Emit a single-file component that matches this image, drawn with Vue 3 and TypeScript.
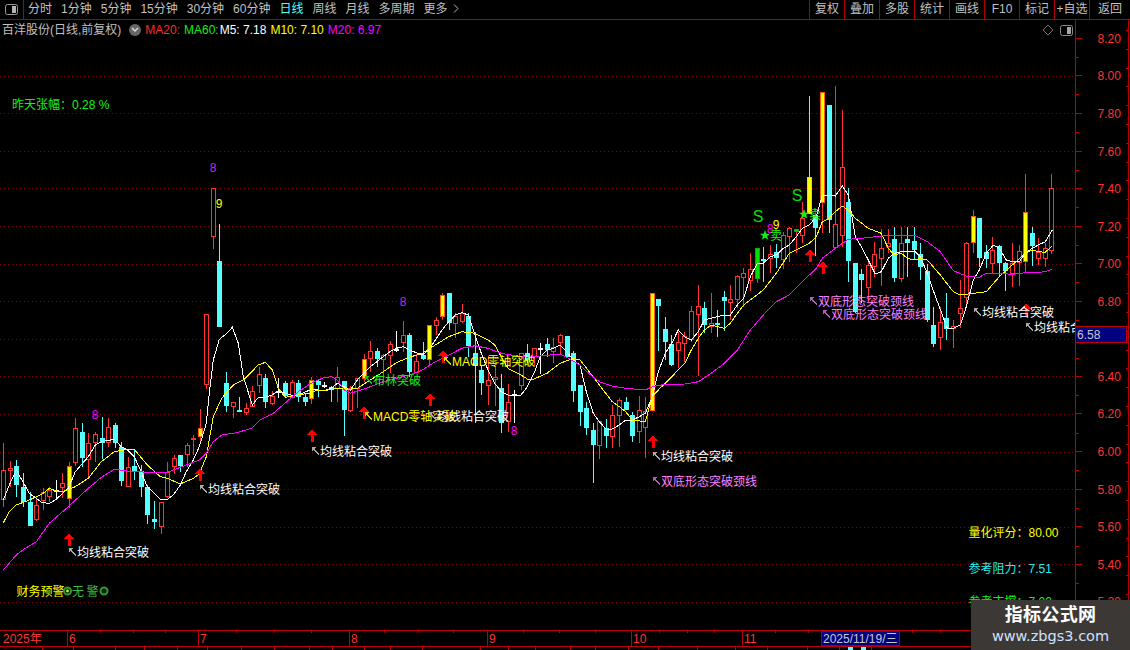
<script setup lang="ts">
type Kind = 'r' | 'c' | 'y' | 'g' | 'w' | 'q';
// top, bottom, high, low, kind (all in screen pixels)
type Bar = [number, number, number, number, Kind];
type Seg = [number, number, number[]];

const STEP = 6.55;

const raw: Bar[] = [
  [470, 500, 443, 507, 'r'], [468, 471, 461, 487, 'r'], [466, 485, 460, 497, 'c'], [487, 502, 473, 507, 'c'],
  [502, 526, 492, 526, 'c'], [505, 520, 497, 521, 'r'], [492, 501, 488, 510, 'r'], [490, 497, 487, 502, 'r'],
  [490, 491, 480, 498, 'w'], [483, 488, 473, 498, 'r'], [466, 499, 462, 508, 'y'], [428, 463, 418, 466, 'r'],
  [432, 458, 423, 467, 'c'], [443, 460, 433, 477, 'r'], [434, 443, 432, 462, 'r'], [438, 443, 417, 459, 'c'],
  [427, 443, 418, 447, 'r'], [425, 443, 423, 448, 'c'], [447, 481, 442, 486, 'c'], [467, 487, 457, 487, 'r'],
  [466, 471, 450, 480, 'c'], [471, 487, 465, 497, 'c'], [487, 515, 485, 524, 'c'], [519, 522, 501, 529, 'c'],
  [502, 527, 502, 534, 'r'], [472, 497, 462, 498, 'r'], [458, 467, 455, 474, 'r'], [455, 466, 455, 472, 'c'],
  [445, 455, 443, 467, 'r'], [438, 440, 435, 455, 'r'], [428, 437, 409, 443, 'y'], [314, 385, 314, 389, 'r'],
  [188, 237, 188, 249, 'r'], [261, 327, 224, 327, 'c'], [383, 406, 372, 412, 'c'], [402, 407, 402, 418, 'r'],
  [410, 412, 397, 412, 'c'], [408, 413, 403, 415, 'r'], [391, 407, 386, 407, 'r'], [374, 386, 367, 393, 'r'],
  [378, 402, 374, 408, 'c'], [396, 404, 391, 405, 'r'], [391, 392, 378, 398, 'w'], [383, 396, 381, 398, 'c'],
  [382, 398, 380, 398, 'r'], [383, 397, 380, 402, 'c'], [397, 402, 393, 406, 'c'], [380, 399, 377, 404, 'y'],
  [381, 385, 380, 397, 'c'], [385, 386, 382, 388, 'w'], [387, 390, 386, 402, 'c'], [377, 389, 367, 402, 'r'],
  [381, 410, 381, 436, 'c'], [388, 411, 386, 412, 'r'], [378, 389, 378, 408, 'r'], [359, 379, 354, 382, 'y'],
  [351, 359, 341, 372, 'r'], [351, 359, 348, 367, 'c'], [355, 360, 354, 380, 'r'], [344, 356, 341, 373, 'r'],
  [349, 350, 331, 352, 'w'], [335, 343, 321, 352, 'r'], [335, 372, 333, 377, 'c'], [361, 373, 354, 373, 'r'],
  [355, 359, 342, 360, 'c'], [325, 360, 325, 366, 'y'], [320, 326, 317, 335, 'r'], [295, 317, 293, 320, 'y'],
  [293, 323, 293, 330, 'c'], [316, 324, 313, 338, 'r'], [313, 322, 304, 323, 'r'], [316, 346, 313, 357, 'c'],
  [353, 366, 332, 423, 'c'], [370, 383, 366, 395, 'c'], [380, 386, 356, 405, 'r'], [377, 380, 366, 406, 'r'],
  [388, 423, 374, 433, 'c'], [402, 422, 384, 432, 'r'], [394, 395, 390, 423, 'w'], [353, 386, 353, 390, 'r'],
  [353, 360, 344, 363, 'c'], [348, 357, 348, 365, 'r'], [348, 349, 343, 374, 'w'], [344, 350, 338, 357, 'c'],
  [347, 352, 338, 363, 'r'], [335, 343, 334, 355, 'r'], [336, 357, 336, 358, 'c'], [353, 391, 351, 402, 'c'],
  [385, 412, 385, 426, 'c'], [408, 428, 402, 435, 'c'], [430, 445, 423, 483, 'c'], [421, 446, 421, 459, 'r'],
  [428, 436, 419, 448, 'c'], [415, 437, 405, 448, 'r'], [400, 416, 398, 447, 'r'], [402, 410, 397, 410, 'c'],
  [415, 436, 412, 442, 'c'], [410, 432, 396, 443, 'r'], [411, 428, 397, 458, 'r'], [293, 411, 293, 411, 'y'],
  [299, 306, 299, 351, 'c'], [329, 342, 317, 360, 'c'], [344, 365, 335, 366, 'c'], [342, 351, 332, 368, 'r'],
  [336, 344, 332, 362, 'r'], [311, 340, 306, 342, 'r'], [306, 315, 285, 376, 'r'], [308, 325, 302, 333, 'c'],
  [323, 327, 293, 333, 'r'], [323, 325, 310, 337, 'c'], [297, 301, 291, 331, 'c'], [299, 303, 285, 320, 'r'],
  [276, 300, 275, 308, 'r'], [273, 278, 268, 307, 'r'], [269, 281, 253, 291, 'r'], [248, 279, 248, 283, 'g'],
  [259, 261, 247, 282, 'c'], [254, 259, 245, 273, 'r'], [252, 258, 244, 268, 'c'], [235, 260, 232, 269, 'r'],
  [228, 237, 227, 262, 'r'], [229, 232, 229, 253, 'g'], [218, 236, 202, 243, 'r'], [177, 214, 96, 214, 'q'],
  [215, 228, 215, 256, 'c'], [92, 203, 92, 233, 'y'], [105, 220, 105, 233, 'c'], [224, 248, 86, 248, 'r'],
  [167, 236, 110, 247, 'r'], [202, 261, 188, 282, 'c'], [263, 312, 263, 313, 'c'], [274, 280, 269, 303, 'c'],
  [265, 288, 260, 302, 'r'], [254, 267, 242, 277, 'r'], [248, 259, 229, 286, 'r'], [243, 247, 229, 253, 'r'],
  [239, 278, 227, 282, 'c'], [243, 279, 227, 282, 'r'], [239, 243, 227, 277, 'c'], [241, 250, 227, 260, 'c'],
  [254, 267, 243, 280, 'c'], [271, 320, 264, 322, 'c'], [325, 344, 307, 347, 'c'], [322, 338, 307, 350, 'r'],
  [318, 329, 293, 340, 'c'], [326, 329, 320, 348, 'r'], [308, 314, 280, 328, 'r'], [243, 298, 242, 307, 'r'],
  [216, 243, 210, 253, 'y'], [218, 258, 218, 267, 'c'], [252, 259, 245, 268, 'c'], [250, 264, 237, 273, 'r'],
  [246, 263, 245, 277, 'c'], [263, 271, 262, 291, 'c'], [263, 274, 243, 287, 'r'], [251, 263, 245, 286, 'r'],
  [212, 262, 174, 273, 'y'], [233, 246, 227, 266, 'c'], [252, 259, 238, 265, 'r'], [248, 259, 243, 267, 'r'],
  [188, 251, 174, 254, 'r'],
];

const bars = raw.map(([top, bottom, high, low, kind], i) => ({
  x: Math.round(3.3 + STEP * i),
  top,
  bottom,
  high,
  low,
  kind,
}));

// line points were read off crops, each segment has its own origin at 3x scale
const toPoints = (segs: Seg[]) =>
  segs
    .map(([ox, oy, p]) => {
      const out: string[] = [];
      for (let i = 0; i < p.length; i += 2) {
        out.push(`${(ox + p[i] / 3).toFixed(1)},${(oy + p[i + 1] / 3).toFixed(1)}`);
      }
      return out.join(' ');
    })
    .join(' ');

const m5 = toPoints([
  [0, 400, [10, 300, 28, 255, 49, 210, 88, 280, 127, 308, 148, 310, 166, 300, 205, 265, 226, 215, 265, 170, 286, 135, 304, 125, 343, 118, 364, 140, 382, 150, 403, 170, 421, 210, 442, 260, 481, 298, 502, 298, 520, 285, 541, 255, 559, 215, 580, 180, 598, 140, 619, 70]],
  [180, 150, [88, 730, 100, 630, 118, 568, 139, 552, 157, 532, 175, 580, 190, 680, 217, 765, 235, 742, 256, 742, 277, 735, 295, 722, 316, 730, 334, 735, 355, 735, 394, 718, 433, 722, 454, 715, 472, 700, 511, 720]],
  [340, 280, [52, 300, 91, 260, 130, 230, 150, 215, 169, 205, 190, 200, 208, 210, 247, 225, 267, 210, 286, 180, 306, 150, 326, 125, 346, 105, 366, 98, 385, 105, 405, 165, 424, 220, 444, 270, 464, 310, 484, 335, 504, 345, 523, 345, 543, 345, 562, 320, 582, 280, 601, 230, 621, 210, 640, 205, 660, 195, 680, 215, 700, 240]],
  [560, 280, [60, 255, 80, 340, 100, 400, 118, 425, 138, 447, 157, 447, 178, 435, 197, 420, 217, 420, 238, 410, 256, 400, 277, 350, 295, 275, 316, 220, 335, 190, 355, 150, 374, 170, 394, 180, 415, 155, 433, 120, 454, 115, 472, 110, 493, 105, 511, 105, 532, 75, 551, 55]],
  [720, 80, [91, 590, 112, 550, 130, 550, 151, 530, 169, 525, 190, 505, 208, 495, 229, 470, 247, 445, 268, 435, 289, 410, 307, 345, 328, 345, 346, 348, 367, 318, 385, 345, 406, 470, 424, 500, 445, 540, 466, 582, 484, 575, 505, 535, 523, 520, 544, 515, 562, 515, 583, 513, 601, 530, 622, 580, 643, 640, 682, 745, 700, 745, 721, 735, 739, 680, 760, 600, 778, 570, 799, 520, 820, 495, 838, 505, 859, 540, 877, 545, 898, 545, 916, 520, 937, 505, 955, 495, 976, 485, 997, 450]],
]);

const m10 = toPoints([
  [0, 400, [10, 368, 28, 335, 49, 315, 88, 300, 127, 282, 148, 265, 166, 272, 187, 275, 226, 260, 265, 235, 304, 185, 343, 155, 382, 148, 403, 148, 442, 195, 481, 230, 502, 235, 541, 252, 580, 235, 598, 222, 619, 170]],
  [180, 150, [100, 800, 125, 745, 160, 705, 190, 690, 235, 645, 256, 637, 277, 660, 295, 715, 316, 742, 355, 735, 394, 728, 412, 720, 433, 722, 472, 715, 511, 718, 532, 715]],
  [340, 280, [91, 300, 130, 275, 169, 248, 208, 232, 247, 220, 286, 195, 326, 170, 366, 155, 405, 160, 444, 180, 464, 195, 484, 230, 504, 265, 543, 285, 562, 297, 582, 297, 621, 280, 660, 250, 700, 235]],
  [560, 280, [60, 240, 80, 265, 118, 315, 157, 365, 178, 380, 197, 395, 217, 420, 256, 425, 277, 350, 295, 330, 335, 290, 374, 250, 394, 210, 415, 175, 433, 150, 454, 135, 493, 145, 511, 130, 532, 100, 551, 75]],
  [720, 80, [91, 660, 130, 630, 169, 580, 208, 520, 247, 500, 268, 490, 289, 470, 307, 425, 328, 415, 346, 395, 367, 378, 385, 390, 406, 415, 445, 445, 484, 460, 505, 505, 523, 525, 544, 520, 562, 535, 583, 540, 601, 535, 622, 540, 661, 585, 700, 635, 721, 645, 760, 640, 799, 635, 838, 590, 877, 555, 916, 520, 937, 510, 955, 515, 976, 517, 997, 497]],
]);

const m20 = toPoints([
  [0, 400, [10, 510, 49, 465, 68, 450, 109, 425, 148, 370, 205, 320, 265, 265, 304, 232, 343, 208, 382, 213, 442, 217, 502, 217, 559, 195, 598, 180, 619, 160, 640, 125]],
  [180, 150, [125, 855, 170, 848, 215, 835, 240, 810, 280, 790, 320, 755, 355, 725, 394, 700, 430, 683, 454, 680, 472, 690, 493, 720, 511, 730, 550, 718]],
  [340, 280, [91, 320, 130, 305, 169, 295, 208, 285, 247, 270, 286, 245, 326, 225, 366, 205, 405, 197, 444, 205, 484, 220, 523, 227, 562, 232, 601, 228, 660, 222, 680, 232, 720, 255]],
  [560, 280, [80, 275, 118, 305, 157, 318, 197, 325, 256, 330, 277, 320, 316, 313, 374, 312, 415, 305, 454, 280, 493, 250, 532, 210]],
  [720, 80, [91, 750, 130, 705, 169, 665, 208, 645, 247, 605, 289, 565, 307, 535, 346, 505, 385, 478, 424, 475, 484, 468, 544, 465, 583, 465, 622, 485, 661, 515, 700, 572, 739, 588, 778, 592, 799, 580, 838, 580, 877, 583, 916, 578, 955, 577, 976, 575, 997, 568]],
]);

const gridY = Array.from({ length: 15 }, (_, i) => Math.round(75.5 + 37.6 * i));

const prices = [
  ['8.20', 38], ['8.00', 75], ['7.80', 113], ['7.60', 151], ['7.40', 188], ['7.20', 226], ['7.00', 263], ['6.80', 301],
  ['6.40', 376], ['6.20', 413], ['6.00', 451], ['5.80', 489], ['5.60', 526], ['5.40', 564], ['5.20', 601],
] as const;
const minorTicks = Array.from({ length: 16 }, (_, i) => Math.round(56.8 + 37.6 * i));
const edgeTicks = Array.from({ length: 32 }, (_, i) => 30 + Math.round(18.8 * i));

const arrows: [number, number][] = [
  [69, 533], [200, 468], [312, 429], [364, 406], [430, 393], [443, 350], [653, 435], [810, 249], [823, 261], [1026, 303],
];

const notes = [
  { x: 69, y: 552, text: '均线粘合突破', tone: 'white' },
  { x: 200, y: 489, text: '均线粘合突破', tone: 'white' },
  { x: 312, y: 451, text: '均线粘合突破', tone: 'white' },
  { x: 653, y: 456, text: '均线粘合突破', tone: 'white' },
  { x: 974, y: 312, text: '均线粘合突破', tone: 'white' },
  { x: 1026, y: 327, text: '均线粘合突破', tone: 'white' },
  { x: 365, y: 416, text: 'MACD零轴突破', tone: 'yellow' },
  { x: 429, y: 416, text: '均线粘合突破', tone: 'white' },
  { x: 444, y: 361, text: 'MACD零轴突破', tone: 'yellow' },
  { x: 365, y: 380, text: '布林突破', tone: 'green' },
  { x: 653, y: 481, text: '双底形态突破颈线', tone: 'pink' },
  { x: 810, y: 301, text: '双底形态突破颈线', tone: 'pink' },
  { x: 823, y: 314, text: '双底形态突破颈线', tone: 'pink' },
];

const digits = [
  { x: 95, y: 415, t: '8', tone: 'magenta' },
  { x: 213, y: 168, t: '8', tone: 'dim' },
  { x: 219, y: 204, t: '9', tone: 'yellow' },
  { x: 403, y: 302, t: '8', tone: 'dim' },
  { x: 514, y: 431, t: '8', tone: 'magenta' },
  { x: 770, y: 229, t: '8', tone: 'magenta' },
  { x: 776, y: 225, t: '9', tone: 'yellow' },
];

const sells = [
  { sx: 758, sy: 216, starX: 765, starY: 235 },
  { sx: 797, sy: 195, starX: 804, starY: 214 },
];

const tabs = ['分时', '1分钟', '5分钟', '15分钟', '30分钟', '60分钟', '日线', '周线', '月线', '多周期'];
const tools = ['复权', '叠加', '多股', '统计', '画线', 'F10', '标记', '+自选', '返回'];

const months = [
  { x: 67, label: '6' }, { x: 198, label: '7' }, { x: 349, label: '8' },
  { x: 487, label: '9' }, { x: 631, label: '10' }, { x: 742, label: '11' },
];
const dateTicks = [100, 133, 165, 236, 274, 311, 384, 418, 453, 523, 559, 595, 659, 687, 714, 775, 808, 912, 940];
const stripTicks = [42, 73, 115, 144, 177, 207, 241, 274, 309, 332, 364, 390, 422, 480, 508, 535, 570, 595, 628, 658, 697, 735, 767, 807, 839, 871];
</script>

<template>
  <div class="screen">
    <header class="toolbar">
      <button class="panel-btn">
        <svg width="13" height="11" viewBox="0 0 13 11"><rect x="0.5" y="0.5" width="12" height="10" rx="2" fill="none" stroke="#9a9a9a" /><rect x="7" y="2" width="4" height="7" fill="#b5b5b5" /></svg>
      </button>
      <nav class="tabs">
        <span v-for="t in tabs" :key="t" class="tab" :class="{ active: t === '日线' }">{{ t }}</span>
        <span class="tab more">更多
          <svg width="6" height="9" viewBox="0 0 6 9"><path d="M1 0.5 L5 4.5 L1 8.5" fill="none" stroke="#b8b8b8" /></svg>
        </span>
      </nav>
      <div class="tools">
        <span v-for="t in tools" :key="t" class="tool">{{ t }}</span>
      </div>
    </header>

    <main class="body">
      <section class="plot">
        <div class="legend">
          <span class="stock">百洋股份(日线,前复权)</span>
          <span class="drop"><svg width="8" height="6" viewBox="0 0 8 6"><path d="M1 1 L4 4 L7 1" fill="none" stroke="#e0e0e0" stroke-width="1.3" /></svg></span>
          <span class="red">MA20:</span>
          <span class="green">MA60:</span>
          <span class="white">M5: 7.18</span>
          <span class="yellow">M10: 7.10</span>
          <span class="magenta">M20: 6.97</span>
        </div>
        <div class="corner-icons">
          <svg width="12" height="12" viewBox="0 0 12 12"><path d="M6 1 L11 6 L6 11 L1 6 Z" fill="none" stroke="#777" /></svg>
          <svg width="13" height="11" viewBox="0 0 13 11"><rect x="0.5" y="0.5" width="12" height="10" rx="2" fill="none" stroke="#8a8a8a" /><rect x="7" y="2" width="4" height="7" fill="#a5a5a5" /></svg>
        </div>

        <svg class="chart" width="1075" height="610" viewBox="0 20 1075 610">
          <line v-for="y in gridY" :key="y" class="grid" x1="0" x2="1075" :y1="y + 0.5" :y2="y + 0.5" />

          <g v-for="(b, i) in bars" :key="i">
            <line class="wick" :class="'k-' + b.kind" :x1="b.x + 0.5" :x2="b.x + 0.5" :y1="b.high" :y2="b.low" />
            <rect class="body-rect" :class="'k-' + b.kind" :x="b.x - 1.5" :y="b.top + 0.5" width="4" :height="Math.max(b.bottom - b.top - 1, 1)" />
          </g>

          <polyline class="line m5" :points="m5" />
          <polyline class="line m10" :points="m10" />
          <polyline class="line m20" :points="m20" />

          <path v-for="([x, y], i) in arrows" :key="'a' + i" class="buy" :transform="`translate(${x} ${y})`" d="M0 0 L5 6 L1.5 6 L1.5 13 L-1.5 13 L-1.5 6 L-5 6 Z" />

          <g v-for="(n, i) in notes" :key="'n' + i">
            <path class="tip" :class="'s-' + n.tone" :d="`M${n.x} ${n.y - 3.5} h3 l-3 3 z M${n.x + 1} ${n.y - 2.5} l6 6`" />
            <text class="label" :class="'f-' + n.tone" :x="n.x + 8" :y="n.y + 4.5">{{ n.text }}</text>
          </g>

          <text v-for="(d, i) in digits" :key="'d' + i" class="label mid" :class="'f-' + d.tone" :x="d.x" :y="d.y + 4">{{ d.t }}</text>

          <g v-for="(s, i) in sells" :key="'s' + i">
            <text class="sign" :x="s.sx" :y="s.sy + 6">S</text>
            <text class="star" :x="s.starX" :y="s.starY + 4">★</text>
            <text class="label f-green" :x="s.starX + 5" :y="s.starY + 4.5">卖</text>
          </g>

          <text class="label f-green" x="12" y="109">昨天张幅：0.28 %</text>

          <text class="label f-yellow" x="16.5" y="595.5">财务预警</text>
          <circle class="ring" cx="67.5" cy="591" r="3.5" />
          <circle class="dot" cx="67.5" cy="591" r="1.4" />
          <text class="label f-dull" x="72" y="595.5">无</text>
          <text class="label f-dull" x="86.5" y="595.5">警</text>
          <circle class="ring" cx="104" cy="591" r="3.5" />

          <text class="label f-yellow" x="968.5" y="537">量化评分：80.00</text>
          <text class="label f-cyan" x="968.5" y="572.5">参考阻力：7.51</text>
          <text class="label f-green" x="968.5" y="606">参考支撑：7.00</text>
        </svg>
      </section>

      <aside class="axis">
        <svg width="55" height="610" viewBox="1075 20 55 610">
          <line class="rule" x1="1075.5" x2="1075.5" y1="20" y2="630" />
          <line class="rule" x1="1128.5" x2="1128.5" y1="20" y2="630" />
          <line v-for="y in edgeTicks" :key="'e' + y" class="rule" x1="1126" x2="1129" :y1="y + 0.5" :y2="y + 0.5" />
          <line v-for="y in minorTicks" :key="'m' + y" class="rule" x1="1075" x2="1079" :y1="y + 0.5" :y2="y + 0.5" />
          <g v-for="[p, y] in prices" :key="p">
            <line class="rule" x1="1075" x2="1082" :y1="y + 0.5" :y2="y + 0.5" />
            <text class="price" x="1097.5" :y="y + 4.5">{{ p }}</text>
          </g>
          <rect x="1075.5" y="326.5" width="51" height="16" fill="#000080" stroke="#c00000" />
          <text class="tag" x="1077" y="338.5">6.58</text>
        </svg>
      </aside>
    </main>

    <footer class="dates">
      <svg width="1130" height="20" viewBox="0 630 1130 20">
        <line class="rule" x1="0" x2="1130" y1="630.5" y2="630.5" />
        <line class="rule" x1="0" x2="1130" y1="646.5" y2="646.5" />
        <line v-for="x in dateTicks" :key="'t' + x" class="rule" :x1="x + 0.5" :x2="x + 0.5" y1="631" y2="633" />
        <line v-for="x in stripTicks" :key="'b' + x" class="rule" :x1="x + 0.5" :x2="x + 0.5" y1="647" y2="650" />
        <rect x="848" y="647" width="5" height="3" fill="#54ffff" />
        <rect x="861" y="647" width="5" height="3" fill="#54ffff" />
        <text class="price" x="3" y="643">2025年</text>
        <g v-for="m in months" :key="m.label">
          <line class="rule" :x1="m.x + 0.5" :x2="m.x + 0.5" y1="631" y2="646" />
          <text class="price" :x="m.x + 2" y="643">{{ m.label }}</text>
        </g>
        <rect x="821.5" y="631.5" width="78" height="14" fill="#000080" stroke="#2020a0" />
        <text class="tag" x="823" y="643">2025/11/19/三</text>
      </svg>
    </footer>

    <aside class="watermark">
      <strong>指标公式网</strong>
      <span>www.zbgs3.com</span>
    </aside>
  </div>
</template>

<style>
html,
body {
  background: #000;
}
</style>

<style scoped>
.screen {
  position: relative;
  display: flex;
  flex-direction: column;
  width: 1130px;
  height: 650px;
  overflow: hidden;
  background: #000;
  color: #c0c0c0;
  font-family: "Liberation Sans", "Noto Sans CJK SC", sans-serif;
  font-size: 12px;
}

.toolbar {
  display: flex;
  flex: none;
  align-items: stretch;
  height: 19px;
  border-bottom: 1px solid #b00000;
  line-height: 19px;
}

.panel-btn {
  display: flex;
  align-items: center;
  justify-content: center;
  width: 24px;
  padding: 0;
  border: none;
  border-right: 1px solid #b00000;
  background: transparent;
}

.tabs {
  display: flex;
  flex: 1;
  gap: 9px;
  padding-left: 4px;
}

.tab {
  white-space: nowrap;
}

.tab.active {
  color: #54ffff;
}

.more svg {
  margin-left: 2px;
}

.tools {
  display: flex;
}

.tool {
  width: 35px;
  border-left: 1px solid #b00000;
  box-sizing: border-box;
  text-align: center;
}

.tool:last-child {
  width: 41px;
}

.body {
  display: flex;
  flex: none;
  height: 610px;
}

.plot {
  position: relative;
  width: 1075px;
  height: 610px;
  overflow: hidden;
}

.chart,
.axis svg,
.dates svg {
  display: block;
  shape-rendering: crispEdges;
}

.legend {
  position: absolute;
  top: 3px;
  left: 2px;
  display: flex;
  align-items: center;
  gap: 4px;
  line-height: 14px;
  white-space: nowrap;
}

.drop {
  display: flex;
  align-items: center;
  justify-content: center;
  width: 12px;
  height: 12px;
  margin-left: 4px;
  border-radius: 50%;
  background: #666;
}

.red { color: #ff2828; margin-right: 0; }
.green { color: #10f010; }
.white { color: #fff; margin-left: -3px; }
.yellow { color: #ffff00; }
.magenta { color: #ff00ff; }

.corner-icons {
  position: absolute;
  top: 4px;
  right: 2px;
  display: flex;
  align-items: center;
  gap: 6px;
}

.grid {
  stroke: #7a0a10;
  stroke-dasharray: 1 3;
}

.wick {
  stroke: #ff3232;
}

.wick.k-c,
.wick.k-q {
  stroke: #54ffff;
}

.wick.k-w {
  stroke: #fff;
}

.body-rect {
  fill: #000;
  stroke: #ff3232;
}

.body-rect.k-c {
  fill: #54ffff;
  stroke: #54ffff;
}

.body-rect.k-y {
  fill: #ffff00;
  stroke: #ff5a00;
}

.body-rect.k-q {
  fill: #ffff00;
  stroke: #ffd400;
}

.body-rect.k-g {
  fill: #00e000;
  stroke: #00b000;
}

.body-rect.k-w {
  fill: #fff;
  stroke: #fff;
}

.line {
  fill: none;
  stroke-width: 1;
}

.m5 { stroke: #fff; }
.m10 { stroke: #ffff00; }
.m20 { stroke: #ff00ff; }

.buy {
  fill: #ff0000;
}

.tip {
  stroke-width: 1;
}

.s-white { stroke: #a8a8a8; fill: #a8a8a8; }
.s-yellow { stroke: #d8d800; fill: #d8d800; }
.s-green { stroke: #00c800; fill: #00c800; }
.s-pink { stroke: #b060b0; fill: #b060b0; }

.label {
  font-size: 12px;
}

.mid {
  text-anchor: middle;
}

.f-white { fill: #fff; }
.f-yellow { fill: #ffff00; }
.f-green { fill: #14f014; }
.f-pink { fill: #ff80ff; }
.f-magenta { fill: #ff00ff; }
.f-dim { fill: #c828e0; }
.f-cyan { fill: #22eeee; }
.f-dull { fill: #3cb83c; }

.sign {
  fill: #00e000;
  font-size: 16px;
  text-anchor: middle;
}

.star {
  fill: #14f014;
  font-size: 11px;
  text-anchor: middle;
}

.ring {
  fill: #0a200a;
  stroke: #2f9a2f;
  stroke-width: 2;
  shape-rendering: auto;
}

.dot {
  fill: #e0e020;
  shape-rendering: auto;
}

.axis {
  width: 55px;
}

.rule {
  stroke: #c00000;
}

.price {
  fill: #ff3232;
  font-size: 12px;
}

.tag {
  fill: #c8c8c8;
  font-size: 12px;
}

.dates {
  flex: none;
  height: 20px;
}

.watermark {
  position: absolute;
  right: 0;
  bottom: 0;
  display: flex;
  flex-direction: column;
  align-items: center;
  box-sizing: border-box;
  width: 159px;
  height: 50px;
  padding-top: 3px;
  background: #3c3836;
}

.watermark strong {
  color: #fff;
  font-size: 18px;
  line-height: 25px;
  font-weight: 700;
  letter-spacing: 0.3px;
}

.watermark span {
  color: #cfe0ff;
  font-family: "DejaVu Sans", sans-serif;
  font-size: 14.5px;
  line-height: 17px;
}
</style>
